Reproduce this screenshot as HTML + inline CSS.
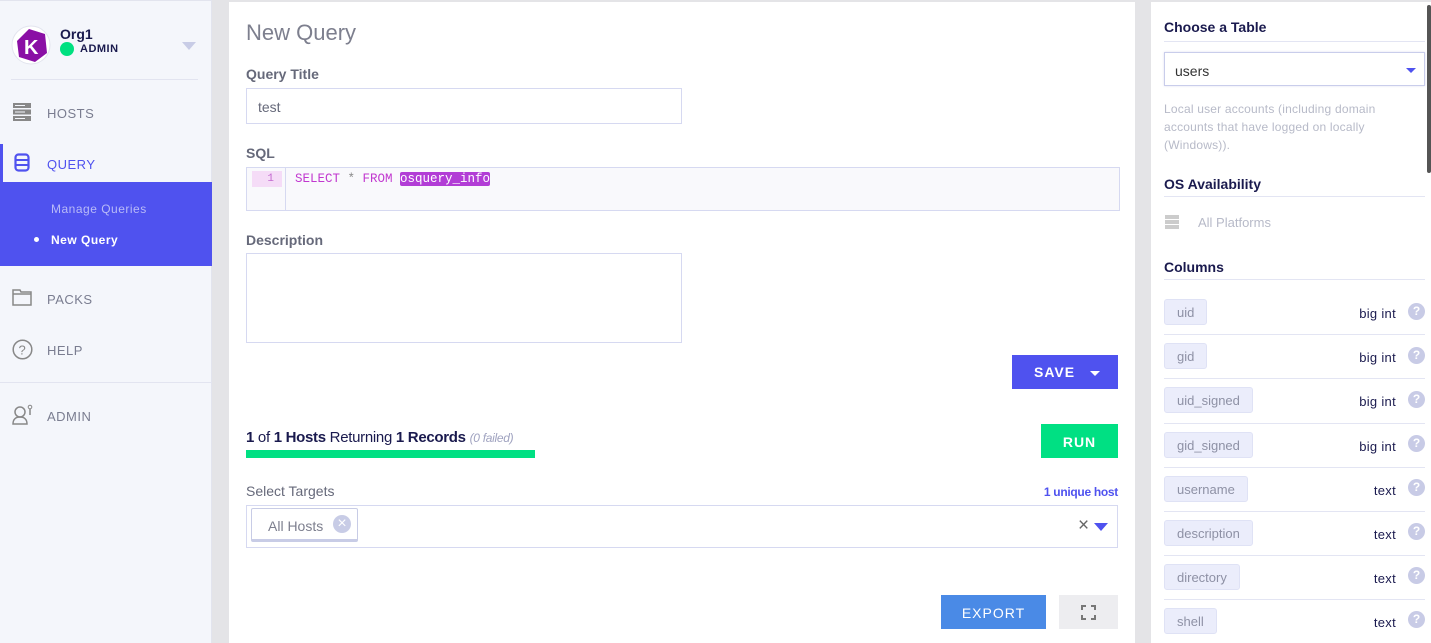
<!DOCTYPE html>
<html><head><meta charset="utf-8"><style>
*{box-sizing:border-box;margin:0;padding:0}
body{width:1431px;height:643px;overflow:hidden;background:#e4e4e7;font-family:"Liberation Sans","DejaVu Sans",sans-serif;position:relative}
.abs{position:absolute}
#side{left:0;top:0;width:212px;height:643px;background:#f4f6fb;border-right:1px solid #e2e4ee;border-top:1px solid #e2e4ee}
.nav{position:absolute;left:47px;font-size:13px;color:#7a7d90;letter-spacing:.5px}
#main{left:229px;top:2px;width:906px;height:641px;background:#fff}
.lbl{position:absolute;font-size:14px;color:#66697a;font-weight:bold}
#right{left:1151px;top:2px;width:280px;height:641px;background:#fff}
.h{position:absolute;left:13px;font-size:14px;font-weight:bold;color:#1a1a4e}
.hr{position:absolute;left:13px;width:261px;border-top:1px solid #e3e5f3}
.pill{position:absolute;left:13px;height:26px;background:#ebedfb;border:1px solid #dfe2f5;border-radius:3px;font-size:13px;color:#8e91a5;padding:5px 12px 0}
.typ{position:absolute;right:35px;font-size:13px;color:#1a1a4e;letter-spacing:.3px}
.q{position:absolute;left:257px;width:17px;height:17px;border-radius:50%;background:#c8cbe6;color:#fff;font-size:12px;font-weight:bold;text-align:center;line-height:17px}
</style></head><body>
<div id="side" class="abs">
  <svg class="abs" style="left:11px;top:24px" width="40" height="40"><circle cx="20" cy="20" r="19" fill="#fff" stroke="#e2e4ee"/><polygon points="6,16 18,4 34,9 36,28 24,37 8,32" fill="#8a0fa5"/><text x="13" y="29" font-size="20" font-weight="bold" fill="#fff" font-family="Liberation Sans">K</text></svg>
  <div class="abs" style="left:60px;top:25px;font-size:14px;font-weight:bold;color:#1a1a4e">Org1</div>
  <div class="abs" style="left:60px;top:41px;width:14px;height:14px;border-radius:50%;background:#00e080"></div>
  <div class="abs" style="left:80px;top:42px;font-size:11px;font-weight:bold;color:#1a1a4e;letter-spacing:.5px">ADMIN</div>
  <div class="abs" style="left:182px;top:41px;border-left:7px solid transparent;border-right:7px solid transparent;border-top:8px solid #c8cce6"></div>
  <div class="abs" style="left:11px;top:78px;width:187px;border-top:1px solid #e2e4f0"></div>
  <svg class="abs" style="left:12px;top:101px" width="20" height="20"><g fill="#888"><rect x="1" y="1" width="18" height="5"/><rect x="1" y="7.5" width="18" height="5"/><rect x="1" y="14" width="18" height="5"/></g><g fill="#f4f6fb"><rect x="3" y="3" width="10" height="1"/><rect x="3" y="9.5" width="10" height="1"/><rect x="3" y="16" width="10" height="1"/></g></svg>
  <div class="nav" style="top:105px">HOSTS</div>
  <div class="abs" style="left:0;top:143px;width:3px;height:38px;background:#4f52ef"></div>
  <svg class="abs" style="left:14px;top:152px" width="16" height="20"><rect x="1.5" y="1.5" width="13" height="16" rx="3" fill="none" stroke="#4f52ef" stroke-width="2.2"/><line x1="2" y1="7" x2="14" y2="7" stroke="#4f52ef" stroke-width="2"/><line x1="2" y1="12" x2="14" y2="12" stroke="#4f52ef" stroke-width="2"/></svg>
  <div class="nav" style="top:156px;color:#4f52ef">QUERY</div>
  <div class="abs" style="left:0;top:181px;width:212px;height:84px;background:#4f52ef"></div>
  <div class="abs" style="left:51px;top:201px;font-size:12px;color:#b9bbf7;letter-spacing:.5px">Manage Queries</div>
  <div class="abs" style="left:34px;top:236px;width:5px;height:5px;border-radius:50%;background:#fff"></div>
  <div class="abs" style="left:51px;top:232px;font-size:12px;color:#fff;font-weight:bold;letter-spacing:.5px">New Query</div>
  <svg class="abs" style="left:12px;top:288px" width="20" height="17"><path d="M1 1h7l1 2h10v13H1z M1 5h18" fill="none" stroke="#888" stroke-width="1.5"/></svg>
  <div class="nav" style="top:291px">PACKS</div>
  <svg class="abs" style="left:12px;top:338px" width="21" height="21"><circle cx="10.5" cy="10.5" r="9.3" fill="none" stroke="#888" stroke-width="1.5"/><text x="6.5" y="15.5" font-size="13" fill="#888" font-family="Liberation Sans">?</text></svg>
  <div class="nav" style="top:342px">HELP</div>
  <div class="abs" style="left:0;top:381px;width:212px;border-top:1px solid #e2e4f0"></div>
  <svg class="abs" style="left:12px;top:403px" width="22" height="22"><circle cx="8" cy="8" r="5" fill="none" stroke="#888" stroke-width="1.5"/><path d="M1 20c0-5 3-7 7-7s7 2 7 7z" fill="none" stroke="#888" stroke-width="1.5"/><circle cx="18" cy="3" r="1.8" fill="none" stroke="#888"/><line x1="18" y1="5" x2="18" y2="11" stroke="#888" stroke-width="1.5"/></svg>
  <div class="nav" style="top:408px">ADMIN</div>
</div>

<div id="main" class="abs">
  <div class="abs" style="left:17px;top:18px;font-size:22px;color:#7d7f8e">New Query</div>
  <div class="lbl" style="left:17px;top:64px">Query Title</div>
  <div class="abs" style="left:17px;top:86px;width:436px;height:36px;border:1px solid #d6d9f1;font-size:14px;color:#66697a;padding:10px 0 0 11px">test</div>
  <div class="lbl" style="left:17px;top:143px">SQL</div>
  <div class="abs" style="left:17px;top:165px;width:874px;height:44px;border:1px solid #d6d9f1;background:#f9f9fc">
    <div class="abs" style="left:0;top:0;width:39px;height:42px;border-right:1px solid #d6d9f1"></div>
    <div class="abs" style="left:5px;top:3px;width:30px;height:16px;background:#f5dcf7;color:#c36bd0;font-size:11px;text-align:right;padding:2px 8px 0 0;font-family:'Liberation Mono',monospace">1</div>
    <div class="abs" style="left:48px;top:4px;font-family:'Liberation Mono',monospace;font-size:12.5px;color:#c138cf">SELECT <span style="color:#888">*</span> FROM <span style="background:#b23dd6;color:#fff;border-radius:2px">osquery_info</span></div>
  </div>
  <div class="lbl" style="left:17px;top:230px">Description</div>
  <div class="abs" style="left:17px;top:251px;width:436px;height:90px;border:1px solid #d6d9f1"></div>
  <div class="abs" style="left:783px;top:353px;width:106px;height:34px;background:#4f52ef;color:#fff;font-size:14px;font-weight:bold;letter-spacing:1px;padding:9px 0 0 22px">SAVE <span style="display:inline-block;margin-left:10px;border-left:5px solid transparent;border-right:5px solid transparent;border-top:5px solid #fff;vertical-align:middle"></span></div>
  <div class="abs" style="left:17px;top:427px;font-size:15px;color:#1a1a4e;letter-spacing:-.3px"><b>1</b> of <b>1 Hosts</b> Returning <b>1 Records</b> <i style="font-size:12px;color:#a0a3c0">(0 failed)</i></div>
  <div class="abs" style="left:17px;top:448px;width:289px;height:8px;background:#00e083"></div>
  <div class="abs" style="left:812px;top:422px;width:77px;height:34px;background:#00e083;color:#fff;font-size:14px;font-weight:bold;letter-spacing:1px;text-align:center;padding-top:10px">RUN</div>
  <div class="abs" style="left:17px;top:481px;font-size:14px;color:#66697a">Select Targets</div>
  <div class="abs" style="right:17px;top:483px;font-size:12px;color:#4f52ef;font-weight:bold;letter-spacing:-.3px">1 unique host</div>
  <div class="abs" style="left:17px;top:503px;width:872px;height:43px;border:1px solid #d6d9f1">
    <div class="abs" style="left:4px;top:2px;width:107px;height:34px;border:1px solid #c8cce6;border-bottom:3px solid #c8cce6;border-radius:2px;font-size:14px;color:#7d7f8e;padding:9px 0 0 16px">All Hosts</div>
    <div class="abs" style="left:86px;top:9px;width:18px;height:18px;border-radius:50%;background:#c8cce6;color:#fff;font-size:16px;text-align:center;line-height:17px">×</div>
    <div class="abs" style="left:831px;top:9px;font-size:19px;color:#666">×</div>
    <div class="abs" style="left:847px;top:17px;border-left:7px solid transparent;border-right:7px solid transparent;border-top:8px solid #4f52ef"></div>
  </div>
  <div class="abs" style="left:712px;top:593px;width:105px;height:34px;background:#4a8ae6;color:#fff;font-size:14px;letter-spacing:1px;text-align:center;padding-top:10px">EXPORT</div>
  <div class="abs" style="left:830px;top:593px;width:59px;height:34px;background:#ededf0">
    <svg class="abs" style="left:22px;top:10px" width="15" height="15"><path d="M1 5V1h4M10 1h4v4M14 10v4h-4M5 14H1v-4" fill="none" stroke="#777" stroke-width="2"/></svg>
  </div>
</div>

<div id="right" class="abs">
  <div class="h" style="top:17px">Choose a Table</div>
  <div class="hr" style="top:39px"></div>
  <div class="abs" style="left:13px;top:50px;width:261px;height:34px;border:1px solid #c9cdeb;box-shadow:0 0 2px #dde;font-size:14px;color:#333;padding:10px 0 0 10px">users</div>
  <div class="abs" style="left:255px;top:66px;border-left:5px solid transparent;border-right:5px solid transparent;border-top:5px solid #4f52ef"></div>
  <div class="abs" style="left:13px;top:98px;width:262px;font-size:12px;line-height:18px;color:#b7bac8;letter-spacing:.2px">Local user accounts (including domain accounts that have logged on locally (Windows)).</div>
  <div class="h" style="top:174px">OS Availability</div>
  <div class="hr" style="top:194px"></div>
  <svg class="abs" style="left:14px;top:213px" width="14" height="14"><g fill="#ccc"><rect x="0" y="0" width="14" height="4"/><rect x="0" y="5" width="14" height="4"/><rect x="0" y="10" width="14" height="4"/></g></svg>
  <div class="abs" style="left:47px;top:213px;font-size:13px;color:#b7bac8">All Platforms</div>
  <div class="h" style="top:257px">Columns</div>
  <div class="hr" style="top:277px"></div>

  <div class="pill" style="top:297px">uid</div><div class="typ" style="top:304px">big int</div><div class="q" style="top:301px">?</div><div class="hr" style="top:332px"></div>
  <div class="pill" style="top:341px">gid</div><div class="typ" style="top:348px">big int</div><div class="q" style="top:345px">?</div><div class="hr" style="top:376px"></div>
  <div class="pill" style="top:385px">uid_signed</div><div class="typ" style="top:392px">big int</div><div class="q" style="top:389px">?</div><div class="hr" style="top:421px"></div>
  <div class="pill" style="top:430px">gid_signed</div><div class="typ" style="top:437px">big int</div><div class="q" style="top:433px">?</div><div class="hr" style="top:465px"></div>
  <div class="pill" style="top:474px">username</div><div class="typ" style="top:481px">text</div><div class="q" style="top:477px">?</div><div class="hr" style="top:509px"></div>
  <div class="pill" style="top:518px">description</div><div class="typ" style="top:525px">text</div><div class="q" style="top:521px">?</div><div class="hr" style="top:553px"></div>
  <div class="pill" style="top:562px">directory</div><div class="typ" style="top:569px">text</div><div class="q" style="top:565px">?</div><div class="hr" style="top:597px"></div>
  <div class="pill" style="top:606px">shell</div><div class="typ" style="top:613px">text</div><div class="q" style="top:609px">?</div>
  <div class="abs" style="left:276px;top:3px;width:4px;height:168px;background:#555;border-radius:2px"></div>
</div>
</body></html>
